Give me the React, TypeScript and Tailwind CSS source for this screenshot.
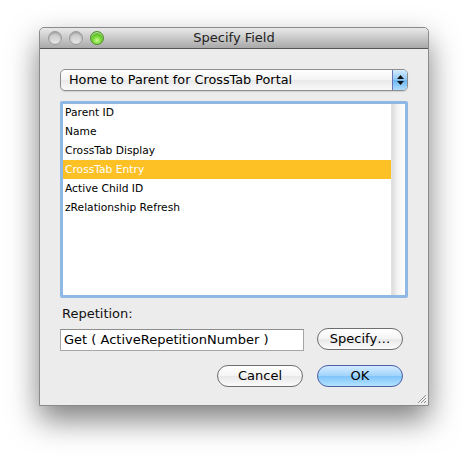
import React from 'react';

const fields = ['Parent ID', 'Name', 'CrossTab Display', 'CrossTab Entry', 'Active Child ID', 'zRelationship Refresh'];

const font = { fontFamily: '"DejaVu Sans", "Lucida Grande", sans-serif' };

function Light({ green }: { green?: boolean }) {
	return (
		<div
			className={
				green
					? 'w-[14px] h-[14px] rounded-full border border-[#4f8f2a] bg-[radial-gradient(circle_at_50%_70%,#c8ff8a_0%,#6fd12f_45%,#3c9a12_100%)] shadow-[inset_0_1px_1px_rgba(255,255,255,0.7)]'
					: 'w-[14px] h-[14px] rounded-full border border-[#9a9a9a] bg-[linear-gradient(#c4c4c4,#e6e6e6)] shadow-[inset_0_1px_2px_rgba(0,0,0,0.25)]'
			}
		/>
	);
}

function PillButton({ label, blue, className }: { label: string; blue?: boolean; className?: string }) {
	return (
		<button
			type="button"
			className={
				'h-[22px] w-[86px] rounded-full border text-[13px] leading-none flex items-center justify-center ' +
				(blue
					? 'border-[#4b5fa5] bg-[linear-gradient(#d4ecff_0%,#9fd2fb_50%,#7ec4fa_51%,#b4e2ff_100%)] text-black '
					: 'border-[#6e6e6e] bg-[linear-gradient(#ffffff_0%,#f4f4f4_50%,#e8e8e8_51%,#fbfbfb_100%)] text-black ') +
				(className || '')
			}
			style={font}
		>
			{label}
		</button>
	);
}

export default function App() {
	return (
		<div className="w-[468px] h-[461px] bg-white pt-[27px] pl-[39px]" style={font}>
			<div className="w-[390px] h-[379px] flex flex-col bg-[#ececec] border border-[#8a8a8a] rounded-t-[5px] shadow-[0_14px_30px_rgba(0,0,0,0.5)]">
				{/* title bar */}
				<div className="h-[21px] shrink-0 rounded-t-[5px] bg-[linear-gradient(#e9e9e9,#a9a9a9)] border-b border-[#565656] flex items-center relative">
					<div className="flex gap-[7px] pl-[8px]">
						<Light />
						<Light />
						<Light green />
					</div>
					<div className="absolute inset-0 flex items-center justify-center text-[13px] text-[#222]">Specify Field</div>
				</div>

				<div className="flex-1 px-[20px] pt-[20px] flex flex-col relative">
					{/* popup */}
					<div className="h-[22px] w-[348px] flex rounded-[5px] border border-[#8e8e8e] bg-[linear-gradient(#ffffff_0%,#f3f3f3_50%,#e9e9e9_51%,#f9f9f9_100%)] shadow-[0_1px_1px_rgba(0,0,0,0.12)]">
						<div className="flex-1 pl-[8px] text-[12.8px] leading-[20px] text-black">Home to Parent for CrossTab Portal</div>
						<div className="w-[15px] rounded-r-[4px] border-l border-[#6c74b8] bg-[linear-gradient(#d3ebff_0%,#8cc6f7_50%,#6ab5f3_51%,#b0ddff_100%)] flex flex-col items-center justify-center gap-[2px]">
							<svg width="7" height="4" viewBox="0 0 7 4"><path d="M3.5 0L7 4H0z" fill="#111" /></svg>
							<svg width="7" height="4" viewBox="0 0 7 4"><path d="M0 0H7L3.5 4z" fill="#111" /></svg>
						</div>
					</div>

					{/* list */}
					<div className="mt-[10px] w-[348px] h-[197px] rounded-[2px] border-[3px] border-[#8fb8e4] bg-white flex">
						<div className="flex-1 -mt-[1px]">
							{fields.map((f) => (
								<div
									key={f}
									className={
										'h-[19px] pl-[2px] text-[10.7px] leading-[19px] ' +
										(f === 'CrossTab Entry' ? 'bg-[#fdc125] text-white' : 'text-black')
									}
								>
									{f}
								</div>
							))}
						</div>
						<div className="w-[14px] bg-[linear-gradient(90deg,#dcdcdc,#f4f4f4_45%,#ffffff)] border-l border-[#e2e2e2]" />
					</div>

					<div className="mt-[6px] pl-[2px] text-[13px] text-[#111]">Repetition:</div>

					<div className="mt-[5px] flex items-center">
						<div className="w-[244px] h-[22px] border border-[#a6a6a6] border-t-[#8c8c8c] bg-white pl-[3px] text-[13px] leading-[20px] text-black">
							Get ( ActiveRepetitionNumber )
						</div>
						<PillButton label="Specify…" className="ml-[13px] -mt-[2px]" />
					</div>

					<div className="mt-[14px] flex justify-end gap-[14px] pr-[5px]">
						<PillButton label="Cancel" />
						<PillButton label="OK" blue />
					</div>

					<svg className="absolute right-[1px] bottom-[1px]" width="11" height="11" viewBox="0 0 11 11">
						<path d="M10 2L2 10M10 5L5 10M10 8L8 10" stroke="#8a8a8a" strokeWidth="1" />
						<path d="M10.8 2.8L2.8 10.8M10.8 5.8L5.8 10.8" stroke="#fff" strokeWidth="0.8" />
					</svg>
				</div>
			</div>
		</div>
	);
}
